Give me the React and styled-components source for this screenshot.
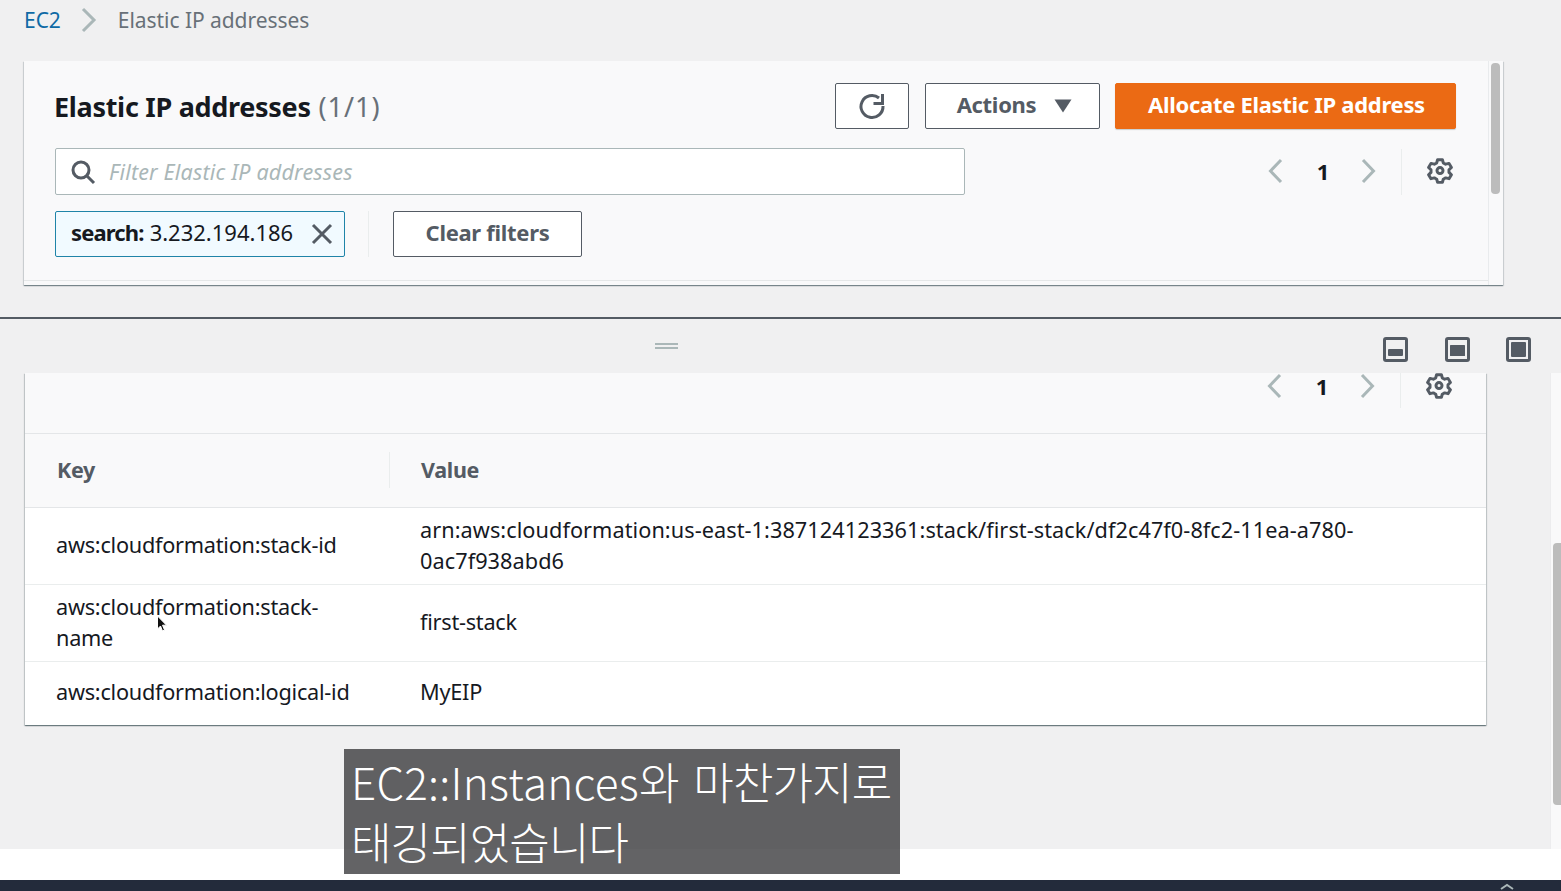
import React from "react";
import styled, { createGlobalStyle } from "styled-components";

const Global = createGlobalStyle`
  html, body { margin: 0; padding: 0; }
  body { font-family: "Noto Sans", "Liberation Sans", sans-serif; background: #f0f0f1; overflow: hidden; }
  * { box-sizing: border-box; }
`;

const Page = styled.div`
  position: relative; width: 1561px; height: 891px; overflow: hidden;
  display: flex; flex-direction: column; background: #f0f0f1;
`;
const TopPane = styled.section`
  height: 319px; flex: none; padding: 0 58px 0 24px; border-bottom: 2px solid #545b64;
`;
const Breadcrumbs = styled.nav`
  height: 61px; padding-bottom: 22px; display: flex; align-items: center; gap: 20.5px; font-size: 21px; letter-spacing: -0.05px;
`;
const Crumb = styled.a`color: #0f6aa5;`;
const Current = styled.span`color: #687078;`;
const Card = styled.div`
  height: 224px; background: #f9f9fa; display: flex; box-shadow: 0 1px 1px 0 rgba(0,28,36,.38), 1px 1px 1px 0 rgba(0,28,36,.1), -1px 1px 1px 0 rgba(0,28,36,.1);
`;
const CardMain = styled.div`
  flex: 1; min-width: 0; height: 220px; border-bottom: 1px solid #e5e7e8; padding: 22px 32px 0 31px;
`;
const Gutter = styled.div`
  width: 15px; flex: none; border-left: 1px solid #e9ebed; padding: 2px 3px 0 2px;
`;
const Thumb = styled.div`
  width: 9px; height: 131px; background: #bcbcbc; border-radius: 4px;
`;
const HeaderRow = styled.div`display: flex; align-items: center; height: 46px;`;
const Title = styled.h1`
  margin: 0 auto 0 -1px; font-size: 27px; font-weight: 700; color: #16191f; letter-spacing: -0.3px;
`;
const Count = styled.span`font-weight: 400; color: #687078; letter-spacing: 1px; margin-left: 1px;`;
const Button = styled.button`
  height: 46px; width: ${p => p.$w}px; margin-left: ${p => p.$ml || 0}px; flex: none; background: #fff; border: 1px solid #545b64; border-radius: 2px;
  color: #545b64; font: 700 22px "Noto Sans", sans-serif; letter-spacing: -0.3px;
  display: flex; align-items: center; justify-content: center; gap: 18px; padding: 0 0 5px ${p => p.$pl || 0}px;
`;
const Primary = styled(Button)`
  background: #eb6a14; border-color: #eb6a14; color: #fff; box-shadow: 0 1px 1px rgba(0,28,36,.2);
`;
const Caret = styled.svg`margin-top: 4px;`;
const RefreshIcon = styled.svg`margin-top: 5px;`;
const FilterRow = styled.div`display: flex; align-items: center; height: 47px; margin-top: 19px;`;
const Filter = styled.div`
  width: 910px; height: 47px; background: #fff; border: 1px solid #aab7b8; border-radius: 2px;
  display: flex; align-items: center; padding-left: 14px; gap: 13px;
`;
const Placeholder = styled.span`font-size: 21.5px; font-style: italic; color: #aab7b8; letter-spacing: 0.18px;`;
const Pager = styled.div`
  margin-left: auto; display: flex; align-items: center; height: ${p => p.$h}px;
  margin-right: ${p => p.$mr}px; padding-bottom: ${p => p.$pb}px;
`;
const PageNum = styled.span`
  width: 34px; margin: 0 19px 0 21px; text-align: center; font-size: 22px; font-weight: 700; color: #16191f;
`;
const PagerSep = styled.div`
  width: 1px; align-self: stretch; background: #eaeded; margin: 0 25px -${p => p.$pb}px 24px;
`;
const TokenRow = styled.div`display: flex; align-items: center; height: 46px; margin-top: 16px;`;
const Token = styled.div`
  width: 290px; height: 46px; background: #f1faff; border: 1px solid #1f84a8; border-radius: 2px;
  display: flex; align-items: center; justify-content: space-between; padding: 0 10px 0 15px;
  font-size: 22px; color: #16191f; white-space: nowrap;
`;
const TokenText = styled.span`padding-bottom: 5px;`;
const TokenKey = styled.b`font-weight: 700; margin-right: 6px; letter-spacing: -0.85px;`;
const TokenSep = styled.div`width: 1px; height: 46px; background: #eaeded; margin: 0 24px 0 23px;`;

const SplitHeader = styled.div`
  height: 54px; flex: none; display: flex; align-items: center; padding-left: 655px; padding-right: 30px; padding-bottom: 1px;
`;
const Grip = styled.div`
  width: 23px; height: 6px; border-top: 2px solid #aab7b8; border-bottom: 2px solid #aab7b8;
`;
const PanelIcons = styled.div`
  margin-left: auto; display: flex; gap: 36.5px; padding-top: 8px;
`;
const Lower = styled.div`
  height: 476px; flex: none; display: flex; padding-left: 25px;
`;
const DetailCard = styled.div`
  width: 1461px; height: 352px; background: #fff; box-shadow: 0 1px 1px 0 rgba(0,28,36,.38), 1px 1px 1px 0 rgba(0,28,36,.15), -1px 1px 1px 0 rgba(0,28,36,.15);
`;
const DetailTop = styled.div`
  height: 61px; background: #f9f9fa; border-bottom: 1px solid #e4e6e8; display: flex; align-items: flex-start;
`;
const HeadRow = styled.div`
  height: 74px; background: #f9f9fa; border-bottom: 1px solid #e4e6e8; display: grid; grid-template-columns: 365px 1fr; align-items: center;
  padding-bottom: 1px; font-size: 21.5px; font-weight: 700; color: #545b64; letter-spacing: -0.3px;
`;
const HeadKey = styled.div`
  height: 36px; padding-left: 32px; border-right: 1px solid #eaeded; line-height: 35px;
`;
const HeadVal = styled.div`padding: 0 0 2px 31px;`;
const Row = styled.div`
  height: ${p => p.$h}px; display: grid; grid-template-columns: 365px 1fr; align-items: center;
  border-bottom: ${p => (p.$last ? "none" : "1px solid #eaeded")};
  font-size: 21.7px; line-height: 31px; color: #16191f; letter-spacing: -0.25px;
`;
const KeyCell = styled.div`padding: 0 25px 3px 31px;`;
const ValCell = styled.div`
  padding: 0 120px 3px 30px; letter-spacing: ${p => (p.$long ? "0.06px" : "inherit")};
`;
const Track = styled.div`
  width: 11px; height: 476px; margin-left: auto; background: #f9f9fa; border-left: 1px solid #ececee; padding: 170px 0 0 2px; flex: none;
`;
const TrackThumb = styled.div`
  width: 8px; height: 262px; background: #bcbcbc; border-radius: 4px 0 0 4px;
`;
const White = styled.div`height: 31px; background: #fff; flex: none;`;
const Dark = styled.div`
  height: 11px; background: #232b3b; flex: none; position: relative; overflow: hidden;
`;
const Caption = styled.div`
  position: absolute; left: 344px; top: 749px; width: 556px; height: 125px; padding: 2px 0 0 7px;
  background: rgba(60,60,62,.8); color: #fff; font: 300 44px/60px "Noto Sans CJK KR", "Noto Sans", sans-serif;
  letter-spacing: -0.9px; white-space: pre-line;
`;
const CaptionLatin = styled.span`letter-spacing: 0.25px;`;
const CaptionGap = styled.span`margin-left: 6px;`;
const Cursor = styled.svg`position: absolute; left: 156px; top: 615px;`;
const DarkGlyph = styled.svg`position: absolute; right: 42px; top: 3px;`;

const Chevron = ({ dir }) => (
  <svg width="18" height="26" viewBox="0 0 18 26" fill="none" stroke="#aab7b8" strokeWidth="3">
    <path d={dir === "left" ? "M14 2 3.5 13 14 24" : "M4 2 14.5 13 4 24"} />
  </svg>
);
const Gear = () => (
  <svg width="26" height="26" viewBox="0 0 26 26" fill="none" stroke="#545b64" strokeWidth="3" strokeLinejoin="round">
    <path d="M10.6 2h4.8l.9 3.3 2.4 1.4 3.3-.9 2.4 4.2-2.4 2.4v2.8l2.4 2.4-2.4 4.2-3.3-.9-2.4 1.4-.9 3.3h-4.8l-.9-3.3-2.4-1.4-3.3.9-2.4-4.2 2.4-2.4v-2.8L1.6 10l2.4-4.2 3.3.9 2.4-1.4z" transform="translate(0 -.2) scale(1 .96)" />
    <circle cx="13" cy="12.6" r="3" />
  </svg>
);
const PagerBlock = ({ h, mr, pb }) => (
  <Pager $h={h} $mr={mr} $pb={pb}>
    <Chevron dir="left" />
    <PageNum>1</PageNum>
    <Chevron dir="right" />
    <PagerSep $pb={pb} />
    <Gear />
  </Pager>
);
const PanelIcon = ({ kind }) => {
  const inner = { bottom: <rect x="5" y="12" width="15" height="7" rx="1" />, middle: <rect x="5" y="8" width="15" height="11" rx="0.5" />, full: <rect x="5" y="5" width="15" height="15" rx="1" /> }[kind];
  return (
    <svg width="25" height="25" viewBox="0 0 25 25">
      <rect x="1.5" y="1.5" width="22" height="22" rx="1.5" fill="#f0f0f1" stroke="#545b64" strokeWidth="3" />
      <g fill="#545b64">{inner}</g>
    </svg>
  );
};

export default function App() {
  return (
    <Page>
      <Global />
      <TopPane>
        <Breadcrumbs>
          <Crumb>EC2</Crumb>
          <svg width="16" height="26" viewBox="0 0 16 26" fill="none" stroke="#aab7b8" strokeWidth="3"><path d="M2 2l11 11L2 24" /></svg>
          <Current>Elastic IP addresses</Current>
        </Breadcrumbs>
        <Card>
          <CardMain>
            <HeaderRow>
              <Title>Elastic IP addresses <Count>(1/1)</Count></Title>
              <Button $w={74}>
                <RefreshIcon width="28" height="28" viewBox="0 0 28 28" fill="none" stroke="#545b64" strokeWidth="3">
                  <path d="M21 6A11 11 0 1 0 25 14" />
                  <path d="M24.500 2v9.500h-9" strokeLinejoin="miter" />
                </RefreshIcon>
              </Button>
              <Button $w={175} $ml={16} $pl={4}>
                Actions
                <Caret width="18" height="14" viewBox="0 0 18 14"><path d="M0.500 0.500h17L9 13.500z" fill="#545b64" /></Caret>
              </Button>
              <Primary $w={341} $ml={15} $pl={2}>Allocate Elastic IP address</Primary>
            </HeaderRow>
            <FilterRow>
              <Filter>
                <svg width="26" height="26" viewBox="0 0 26 26" fill="none" stroke="#545b64" strokeWidth="3">
                  <circle cx="11" cy="11" r="8" /><path d="M17 17l7 7" />
                </svg>
                <Placeholder>Filter Elastic IP addresses</Placeholder>
              </Filter>
              <PagerBlock h={46} mr={3} pb={2} />
            </FilterRow>
            <TokenRow>
              <Token>
                <TokenText><TokenKey>search:</TokenKey>3.232.194.186</TokenText>
                <svg width="24" height="24" viewBox="0 0 24 24" fill="none" stroke="#545b64" strokeWidth="3"><path d="M3 3l18 18M21 3L3 21" /></svg>
              </Token>
              <TokenSep />
              <Button $w={189}>Clear filters</Button>
            </TokenRow>
          </CardMain>
          <Gutter><Thumb /></Gutter>
        </Card>
      </TopPane>
      <SplitHeader>
        <Grip />
        <PanelIcons>
          <PanelIcon kind="bottom" />
          <PanelIcon kind="middle" />
          <PanelIcon kind="full" />
        </PanelIcons>
      </SplitHeader>
      <Lower>
        <DetailCard>
          <DetailTop><PagerBlock h={35} mr={34} pb={10} /></DetailTop>
          <HeadRow>
            <HeadKey>Key</HeadKey>
            <HeadVal>Value</HeadVal>
          </HeadRow>
          <Row $h={77}>
            <KeyCell>aws:cloudformation:stack-id</KeyCell>
            <ValCell $long>arn:aws:cloudformation:us-east-1:387124123361:stack/first-stack/df2c47f0-8fc2-11ea-a780-0ac7f938abd6</ValCell>
          </Row>
          <Row $h={77}>
            <KeyCell>aws:cloudformation:stack-name</KeyCell>
            <ValCell>first-stack</ValCell>
          </Row>
          <Row $h={61} $last>
            <KeyCell>aws:cloudformation:logical-id</KeyCell>
            <ValCell>MyEIP</ValCell>
          </Row>
        </DetailCard>
        <Track><TrackThumb /></Track>
      </Lower>
      <White />
      <Dark>
        <DarkGlyph width="20" height="8" viewBox="0 0 20 8" fill="none" stroke="#aab7b8" strokeWidth="2"><path d="M2 6l6-4 6 4" /></DarkGlyph>
      </Dark>
      <Cursor width="12" height="18" viewBox="0 0 12 18">
        <path d="M1.500 1v13l3-3 2 5 2-1-2-4.800h4z" fill="#111" stroke="#fff" strokeWidth="1" />
      </Cursor>
      <Caption><CaptionLatin>EC2::Instances</CaptionLatin>와 <CaptionGap>마찬가지로</CaptionGap>{"\n"}태깅되었습니다</Caption>
    </Page>
  );
}
